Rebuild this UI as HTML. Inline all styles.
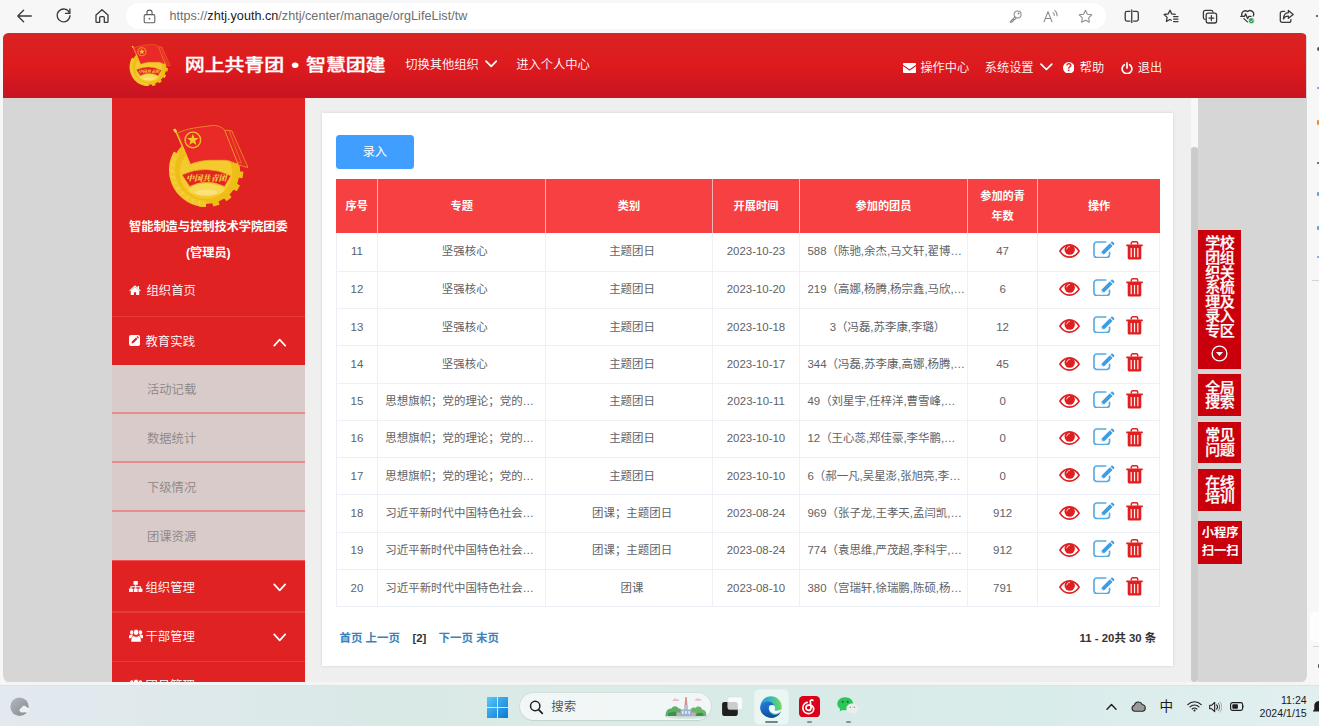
<!DOCTYPE html>
<html lang="zh-CN">
<head>
<meta charset="utf-8">
<title>智慧团建</title>
<style>
*{box-sizing:border-box;margin:0;padding:0}
html,body{width:1319px;height:726px;overflow:hidden}
body{position:relative;background:#f7f7f7;font-family:"Liberation Sans","Noto Sans CJK SC",sans-serif;color:#333;font-size:12px}
.abs{position:absolute}
/* ---------- browser chrome ---------- */
#chrome{position:absolute;left:0;top:0;width:1319px;height:33px;background:#f7f7f7}
#urlbar{position:absolute;left:126px;top:3px;width:980px;height:26px;border-radius:13px;background:#fff}
#url{position:absolute;left:169.4px;top:8px;font-size:12.6px;line-height:16px;color:#6e6e6e;white-space:nowrap;letter-spacing:0.02px}
#url b{font-weight:400;color:#1b1b1b}
.cico{position:absolute;stroke:#3a3a3a;fill:none;stroke-width:1.3;stroke-linecap:round;stroke-linejoin:round}
/* ---------- page ---------- */
#page{position:absolute;left:3.4px;top:32.5px;width:1303.2px;height:650.5px;background:#d6d6d6;border-radius:5.5px 5.5px 8px 8px;overflow:hidden}
#hdr{position:absolute;left:0;top:0;width:1303px;height:65px;background:linear-gradient(#d82424 0%,#dc2020 18%,#de1b1e 40%,#dc1a1e 55%,#d2171f 76%,#c81423 100%)}
#hdr .t{position:absolute;color:#fff;white-space:nowrap}
#side{position:absolute;left:108.6px;top:65px;width:192.7px;height:600px;background:#e12222;color:#fff}
#main{position:absolute;left:301.3px;top:65px;width:886.3px;height:600px;background:#efefef}
#sb{position:absolute;left:1187.9px;top:114.5px;width:6.3px;height:535.3px;background:#cbcbcb;border-radius:3.2px}
#sbtrack{position:absolute;left:1187.6px;top:65px;width:7px;height:600px;background:#f7f7f7}
#card{position:absolute;left:17.2px;top:15.5px;width:851.5px;height:552.5px;background:#fff;box-shadow:0 0 3px rgba(0,0,0,.12)}


#ttl{left:181.4px;top:17px;font-size:20px;line-height:30px;font-weight:500;-webkit-text-stroke:.3px #fff;letter-spacing:-0.15px;transform:scaleY(.86);transform-origin:0 50%}
#ttl .dot{display:inline-block;width:22px;text-align:center;font-size:24px;line-height:10px;vertical-align:-1.2px;-webkit-text-stroke:0;font-family:"Liberation Sans",sans-serif}
#hdr .nav{font-size:12.3px;line-height:18px;font-weight:350;letter-spacing:-0.05px}
#hdr .nav2{font-size:12.2px;line-height:18px;font-weight:350}

/* ---------- sidebar ---------- */
#side .org{position:absolute;left:0;width:192.7px;text-align:center;font-size:12.25px;line-height:18px;font-weight:700;white-space:nowrap;letter-spacing:-0.05px}
#side .m1{position:absolute;font-size:12.4px;line-height:18px;font-weight:350;white-space:nowrap}
#side .hl{position:absolute;left:0;width:192.7px;height:1.6px;background:#e83c3c}
#side .hl.b{background:#f05252;height:1px}
#sub{position:absolute;left:0;top:267.8px;width:192.7px;height:194.8px;background:#d9cbc9}
#sub .s{height:48.9px;border-bottom:2px solid #e88d8d;padding-left:35px;font-size:12.3px;line-height:50.6px;color:#8c8686;font-weight:350}
#sub .s.last{border-bottom:0}

/* ---------- floating buttons ---------- */
.fb{position:absolute;left:1195px;width:42.7px;background:#c9000b;color:#fff;text-align:center;font-size:15px;line-height:14.6px;font-weight:500;-webkit-text-stroke:.25px #fff;letter-spacing:-0.4px;white-space:nowrap;overflow:hidden}
.fb.s{-webkit-text-stroke:0;font-size:12.3px;font-weight:700;line-height:18.2px;letter-spacing:-0.1px;width:43.4px}

/* edge sidebar bits */
.eb{position:absolute;border-radius:1px}
/* ---------- card ---------- */
#btn{position:absolute;left:14px;top:22px;width:78px;height:34px;border-radius:3.5px;background:#409eff;color:#fff;font-size:12.2px;line-height:34px;text-align:center}
#tb{position:absolute;left:14px;top:66px;width:823.6px;border-collapse:collapse;table-layout:fixed;font-size:11.45px;color:#606266}
#tb th{height:54.2px;background:#f64041;color:#fff;font-weight:700;font-size:11.2px;border-right:1px solid #f1b3b3;text-align:center;line-height:20.2px;padding:0}
#tb th:last-child{border-right:0}
#tb td{height:37.27px;border-bottom:1px solid #edf0f6;border-right:1px solid #edf0f6;text-align:center;padding:0;white-space:nowrap;overflow:hidden;line-height:19px}
#tb td:first-child{border-left:1px solid #ebeef5}
#tb tbody tr:first-child td{height:38.1px}
#tb td.l{text-align:left;padding-left:7.3px}
#tb td.c{padding-left:6px}
#tb td.c2{padding-left:8px}
#tb td.op{font-size:0}
#tb svg{display:inline-block;vertical-align:middle;position:relative;top:-1.7px}
.i-eye{width:21px;height:14px;margin:2px 12.7px 0 4.8px}
.i-edit{width:21.4px;height:17.5px;margin:-1px 11.6px 0 0}
.i-trash{width:17px;height:19px;margin:0 0 0 0}
#pgl{position:absolute;left:17.6px;top:516.7px;font-size:11.45px;line-height:16px;font-weight:700;color:#3a82b9;white-space:nowrap}
#pgl b{color:#333;margin:0 12.2px 0 12.6px}
#pgr{position:absolute;right:17.2px;top:516.7px;font-size:11.4px;line-height:16px;font-weight:700;color:#333;white-space:nowrap}
/* ---------- taskbar ---------- */
#gap{position:absolute;left:0;top:682px;width:1319px;height:4px;background:#f5f5f5}
#task{position:absolute;left:0;top:686px;width:1319px;height:40px;background:linear-gradient(90deg,#e2e9ef 0%,#dfe9ec 12%,#d9e9e6 30%,#dcebe6 45%,#d8ebe8 60%,#d8ecea 78%,#e2eff0 100%);box-shadow:0 -1px 0 #dde4e6}
#srch{left:520px;top:7.2px;width:190.6px;height:27px;border-radius:13.5px;background:rgba(255,255,255,.62);box-shadow:0 0 0 .7px rgba(190,205,205,.4),0 .8px 1px rgba(120,140,140,.25)}
#srch span{position:absolute;left:31.2px;top:4.4px;font-size:12.5px;line-height:18px;color:#4e4e4e;font-weight:350}
.ind{position:absolute;top:35px;height:2.2px;border-radius:1.2px;background:#8a8f90}
.clk{right:12.3px;font-size:10.6px;line-height:14px;color:#1b1b1b;text-align:right;white-space:nowrap;font-family:"Liberation Sans",sans-serif}
</style>
</head>
<body>
<svg width="0" height="0" style="position:absolute"><defs>
<symbol id="emblem" viewBox="65 55 615 632">
  <!-- gear teeth -->
  <g fill="#efbd17">
    <circle cx="357" cy="400" r="262"/>
    <g transform="translate(357 400)">
      <rect x="245" y="-26" width="42" height="50" transform="rotate(8)"/>
      <rect x="245" y="-26" width="42" height="50" transform="rotate(30)"/>
      <rect x="245" y="-26" width="42" height="50" transform="rotate(52)"/>
      <rect x="245" y="-26" width="42" height="50" transform="rotate(74)"/>
      <rect x="245" y="-26" width="40" height="50" transform="rotate(96)"/>
    </g>
  </g>
  <!-- wheat side -->
  <path d="M357 685 A285 285 0 0 1 110 258 L150 282 A238 238 0 0 0 357 638 Z" fill="#f3c62a"/>
  <g fill="none" stroke="#f7d558" stroke-width="9" stroke-linecap="round" opacity=".75">
    <path d="M98 300 l26 24M84 350 l30 20M80 402 l32 14M86 452 l32 6M102 502 l30 -4M128 548 l28 -12M162 590 l24 -18M204 626 l18 -24M252 652 l12 -26M304 668 l6 -28"/>
  </g>
  <!-- inner disc -->
  <circle cx="357" cy="420" r="205" fill="#f4ca2e"/>
  <circle cx="357" cy="420" r="205" fill="none" stroke="#e9b412" stroke-width="5" opacity=".6"/>
  <!-- sun -->
  <ellipse cx="360" cy="552" rx="135" ry="46" fill="#f8d955"/>
  <ellipse cx="360" cy="575" rx="86" ry="22" fill="#fbe27a"/>
  <!-- banner -->
  <path d="M172 438 Q360 352 548 446 L500 528 Q360 462 232 528 Z" fill="#e32424" stroke="#f0b822" stroke-width="5" stroke-linejoin="round"/>
  <text x="360" y="486" font-family="'Liberation Serif','Noto Serif CJK SC',serif" font-size="62" font-weight="900" font-style="italic" fill="#f7d040" text-anchor="middle" textLength="312" lengthAdjust="spacingAndGlyphs">中国共青团</text>
  <!-- flag back fold -->
  <path d="M498 94 L556 100 L680 382 L606 362 Z" fill="#e62828" stroke="#f0b326" stroke-width="5" stroke-linejoin="round"/>
  <path d="M535 98 L628 348 L560 336" fill="none" stroke="#f0b326" stroke-width="4" opacity=".85"/>
  <!-- flag front -->
  <path d="M138 116 C220 78 300 74 380 62 C430 54 470 60 500 94 L602 352 C560 350 545 322 480 326 C400 328 330 318 236 358 Z" fill="#e92a28" stroke="#f0b326" stroke-width="5" stroke-linejoin="round"/>
  <!-- pole -->
  <path d="M122 100 L236 360" stroke="#f2c32a" stroke-width="9" stroke-linecap="round"/>
  <path d="M103 92 L120 82 L136 104 L120 116 Z" fill="#f6d24a"/>
  <!-- ring + star -->
  <circle cx="256" cy="170" r="60" fill="none" stroke="#f2bd22" stroke-width="11"/>
  <path d="M256.0 123.0 L267.2 154.6 L300.7 155.5 L274.1 175.9 L283.6 208.0 L256.0 189.0 L228.4 208.0 L237.9 175.9 L211.3 155.5 L244.8 154.6 Z" fill="#f4c628"/>
</symbol>
</defs></svg>

<div id="chrome">
  <div id="urlbar"></div>
<svg class="cico" style="left:16px;top:7.5px;width:17px;height:16px" viewBox="0 0 17 16"><path d="M15.3 8 H2 M7.6 2.2 L1.8 8 L7.6 13.8"/></svg>
<svg class="cico" style="left:54.5px;top:7px;width:17px;height:17px" viewBox="0 0 17 17"><path d="M14.6 6.2 A6.4 6.4 0 1 0 15 8.6"/><path d="M14.9 2 V6.4 H10.5"/></svg>
<svg class="cico" style="left:93.5px;top:7.5px;width:16px;height:16px" viewBox="0 0 16 16"><path d="M2 7 L8 1.7 L14 7 V13.4 A0.9 0.9 0 0 1 13.1 14.3 H10.3 V9.6 A1 1 0 0 0 9.3 8.6 H6.7 A1 1 0 0 0 5.7 9.6 V14.3 H2.9 A0.9 0.9 0 0 1 2 13.4 Z"/></svg>
<svg class="cico" style="left:142.5px;top:8.5px;width:13px;height:15px;stroke:#5f5f5f;stroke-width:1.1" viewBox="0 0 13 15"><rect x="1.2" y="5.6" width="10.6" height="8.2" rx="1.4"/><path d="M3.9 5.6 V3.7 A2.6 2.6 0 0 1 9.1 3.7 V5.6"/><circle cx="6.5" cy="9.7" r=".9" fill="#5f5f5f" stroke="none"/></svg>
<!-- key -->
<svg class="cico" style="left:1008.5px;top:9.5px;width:13px;height:13px;stroke:#8c8c8c;stroke-width:1.05" viewBox="0 0 13 13"><circle cx="8.6" cy="4.4" r="3.5"/><path d="M6 6.9 L1.2 11.7 V12.2 H3.1 V10.9 H4.4 V9.6 H5.7 L7.1 8.2"/><circle cx="9.6" cy="3.4" r=".5"/></svg>
<!-- read aloud -->
<svg class="cico" style="left:1043px;top:8.5px;width:16px;height:14px;stroke:#8c8c8c;stroke-width:1.05" viewBox="0 0 16 14"><path d="M1 12.8 L5 2.6 L9 12.8 M2.4 9.4 H7.6"/><path d="M10 3.6 A3 3 0 0 1 11.3 6.6 M11.8 1.6 A5.4 5.4 0 0 1 14 6.8"/></svg>
<!-- star -->
<svg class="cico" style="left:1078px;top:8.5px;width:15px;height:14.5px;stroke:#8c8c8c;stroke-width:1.05" viewBox="0 0 15 14.5"><path d="M7.5 1.2 L9.4 5.2 L13.8 5.8 L10.6 8.9 L11.4 13.3 L7.5 11.2 L3.6 13.3 L4.4 8.9 L1.2 5.8 L5.6 5.2 Z"/></svg>
<!-- split -->
<svg class="cico" style="left:1123.5px;top:8.8px;width:15.5px;height:14.5px" viewBox="0 0 15.5 14.5"><path d="M6 2.4 H3 A1.8 1.8 0 0 0 1.2 4.2 V10.3 A1.8 1.8 0 0 0 3 12.1 H6 M9.5 2.4 H12.5 A1.8 1.8 0 0 1 14.3 4.2 V10.3 A1.8 1.8 0 0 1 12.5 12.1 H9.5 M7.75 0.8 V13.7"/></svg>
<!-- favorites -->
<svg class="cico" style="left:1162.5px;top:8.5px;width:16px;height:15px" viewBox="0 0 16 15"><path d="M7 1.3 L8.7 4.9 L12.2 5.4 M7 1.3 L5.2 4.9 L1.2 5.5 L4.1 8.4 L3.4 12.4 L7 10.5 L8.4 11.3"/><path d="M10.6 7.6 H15 M10.6 10.1 H15 M10.6 12.6 H15"/></svg>
<!-- collections -->
<svg class="cico" style="left:1201.5px;top:8.5px;width:16px;height:15px" viewBox="0 0 16 15"><rect x="4.2" y="4.2" width="10.4" height="9.8" rx="2"/><path d="M3.2 10.4 A1.9 1.9 0 0 1 1.4 8.5 V3.3 A2 2 0 0 1 3.4 1.3 H9 A1.9 1.9 0 0 1 10.9 3"/><path d="M9.4 6.6 V11.6 M6.9 9.1 H11.9"/></svg>
<!-- essentials -->
<svg class="cico" style="left:1240px;top:8.6px;width:16px;height:16px" viewBox="0 0 16 16"><path d="M2.3 7.3 A3.6 3.6 0 0 1 7.6 2.6 A3.6 3.6 0 0 1 13.2 7 M3.9 9.6 L7.4 12.9"/><path d="M0.8 7.4 H4.4 L5.7 4.9 L7.6 9.6 L8.9 7.4 H11"/><circle cx="11.4" cy="11.7" r="3" fill="#1f9a45" stroke="#f7f7f7" stroke-width=".8"/><path d="M10.1 11.8 L11.1 12.8 L12.8 10.8" stroke="#fff" stroke-width=".8"/></svg>
<!-- share -->
<svg class="cico" style="left:1279px;top:8.5px;width:15.5px;height:15px" viewBox="0 0 15.5 15"><path d="M5.6 2.4 H3.2 A1.9 1.9 0 0 0 1.3 4.3 V11.4 A1.9 1.9 0 0 0 3.2 13.3 H10 A1.9 1.9 0 0 0 11.9 11.4 V10.6"/><path d="M9.4 1.4 L14.2 5.4 L9.4 9.3 V7.1 C7 7 5.4 8 4.4 9.9 C4.6 6.4 6.4 4 9.4 3.7 Z"/></svg>
<div style="position:absolute;left:1315.6px;top:14.6px;width:2.4px;height:2.4px;border-radius:50%;background:#3a3a3a"></div>

  <div id="url">https://<b>zhtj.youth.cn</b>/zhtj/center/manage/orgLifeList/tw</div>
</div>
<div id="page">
  <div id="hdr">
<svg class="abs" style="left:126px;top:11.5px;width:41.4px;height:42.4px"><use href="#emblem"/></svg>
<div class="t" id="ttl">网上共青团<span class="dot">•</span>智慧团建</div>
<div class="t nav" style="left:401.8px;top:23.5px">切换其他组织</div>
<svg class="abs" style="left:481.6px;top:27.4px;width:12.4px;height:8px" viewBox="0 0 12.4 8"><path d="M1 1.2 L6.2 6.4 L11.4 1.2" fill="none" stroke="#fff" stroke-width="1.7" stroke-linecap="round" stroke-linejoin="round"/></svg>
<div class="t nav" style="left:512.8px;top:23.5px">进入个人中心</div>
<svg class="abs" style="left:899.6px;top:30.2px;width:13.2px;height:10px" viewBox="0 0 13.2 10"><path d="M0 1.1 A1.1 1.1 0 0 1 1.1 0 H12.1 A1.1 1.1 0 0 1 13.2 1.1 V1.7 L6.6 6.3 L0 1.7 Z M0 3.1 L6.6 7.7 L13.2 3.1 V8.9 A1.1 1.1 0 0 1 12.1 10 H1.1 A1.1 1.1 0 0 1 0 8.9 Z" fill="#fff"/></svg>
<div class="t nav2" style="left:917px;top:26px">操作中心</div>
<div class="t nav2" style="left:981.4px;top:26px">系统设置</div>
<svg class="abs" style="left:1036.4px;top:30.4px;width:12.8px;height:8px" viewBox="0 0 12.8 8"><path d="M1 1.2 L6.4 6.5 L11.8 1.2" fill="none" stroke="#fff" stroke-width="1.7" stroke-linecap="round" stroke-linejoin="round"/></svg>
<svg class="abs" style="left:1059.2px;top:29.4px;width:11.6px;height:11.6px" viewBox="0 0 12 12"><circle cx="6" cy="6" r="6" fill="#fff"/><text x="6" y="9.8" font-family="'Liberation Sans',sans-serif" font-size="10.6" font-weight="700" fill="#d81c1f" text-anchor="middle">?</text></svg>
<div class="t nav2" style="left:1076.4px;top:26px">帮助</div>
<svg class="abs" style="left:1117.8px;top:29px;width:12px;height:12.4px" viewBox="0 0 12 12.4"><path d="M3.3 2.7 A4.9 4.9 0 1 0 8.7 2.7" fill="none" stroke="#fff" stroke-width="1.7" stroke-linecap="round"/><path d="M6 0.9 V6" stroke="#fff" stroke-width="1.7" stroke-linecap="round"/></svg>
<div class="t nav2" style="left:1134.4px;top:26px">退出</div>

</div>
  <div id="side">
<svg class="abs" style="left:56px;top:27.2px;width:80px;height:82.2px"><use href="#emblem"/></svg>
<div class="org" style="top:120.2px">智能制造与控制技术学院团委</div>
<div class="org" style="top:146.8px">(管理员)</div>
<!-- 组织首页 -->
<svg class="abs" style="left:17.2px;top:187.2px;width:12px;height:10.8px" viewBox="0 0 11.6 9.6" preserveAspectRatio="none"><path d="M5.8 1.7 L1.7 5.1 V8.9 A0.4 0.4 0 0 0 2.1 9.3 H4.7 V6.4 H6.9 V9.3 H9.5 A0.4 0.4 0 0 0 9.9 8.9 V5.1 Z" fill="#fff"/><path d="M0.3 4.8 L5.8 0.3 L8.3 2.35 V1 H9.7 V3.5 L11.3 4.8 L10.7 5.5 L5.8 1.5 L0.9 5.5 Z" fill="#fff"/></svg>
<div class="m1" style="left:34.4px;top:184.2px">组织首页</div>
<div class="hl" style="top:218.2px"></div>
<!-- 教育实践 -->
<svg class="abs" style="left:17.4px;top:237.5px;width:11px;height:11px" viewBox="0 0 11 11"><rect x="0" y="0" width="11" height="11" rx="2" fill="#fff"/><path d="M2.5 8.5 L2.9 6.5 L7 2.4 L8.6 4 L4.5 8.1 Z M7.5 1.9 L8.1 1.3 A0.5 0.5 0 0 1 8.8 1.3 L9.7 2.2 A0.5 0.5 0 0 1 9.7 2.9 L9.1 3.5 Z" fill="#e12222"/></svg>
<div class="m1" style="left:33.5px;top:235.3px">教育实践</div>
<svg class="abs" style="left:161px;top:240.2px;width:13.4px;height:9px" viewBox="0 0 13.4 9"><path d="M1.2 7.6 L6.7 1.6 L12.2 7.6" fill="none" stroke="#fff" stroke-width="1.7" stroke-linecap="round" stroke-linejoin="round"/></svg>
<div id="sub">
  <div class="s">活动记载</div>
  <div class="s">数据统计</div>
  <div class="s">下级情况</div>
  <div class="s last">团课资源</div>
</div>
<!-- 组织管理 -->
<div class="hl b" style="top:462.6px"></div>
<svg class="abs" style="left:17.2px;top:483.2px;width:13.4px;height:11.4px" viewBox="0 0 13 10.6" preserveAspectRatio="none"><rect x="4.4" y="0" width="4.2" height="3.6" rx=".5" fill="#fff"/><rect x="0" y="7" width="3.8" height="3.6" rx=".5" fill="#fff"/><rect x="4.6" y="7" width="3.8" height="3.6" rx=".5" fill="#fff"/><rect x="9.2" y="7" width="3.8" height="3.6" rx=".5" fill="#fff"/><path d="M6.5 3.4 V7.2 M1.9 7.2 V5.3 H11.1 V7.2" fill="none" stroke="#fff" stroke-width="1"/></svg>
<div class="m1" style="left:33.4px;top:481px">组织管理</div>
<svg class="abs" style="left:161px;top:485.6px;width:13.4px;height:9px" viewBox="0 0 13.4 9"><path d="M1.2 1.4 L6.7 7.4 L12.2 1.4" fill="none" stroke="#fff" stroke-width="1.7" stroke-linecap="round" stroke-linejoin="round"/></svg>
<div class="hl" style="top:513.8px"></div>
<!-- 干部管理 -->
<svg class="abs usr" style="left:17px;top:531.6px;width:14.2px;height:13px" viewBox="0 0 13.8 11.6" preserveAspectRatio="none"><circle cx="2.7" cy="2.9" r="1.7" fill="#fff"/><circle cx="11.1" cy="2.9" r="1.7" fill="#fff"/><path d="M0 8.2 V6.7 A1.9 1.9 0 0 1 1.9 4.8 H3.6 L3.4 8.2 Z M13.8 8.2 V6.7 A1.9 1.9 0 0 0 11.9 4.8 H10.2 L10.4 8.2 Z" fill="#fff"/><circle cx="6.9" cy="3" r="2.7" fill="#fff" stroke="#e12222" stroke-width=".7"/><path d="M2.6 11.6 A1 1 0 0 1 1.9 10.6 C1.9 8 3.2 6 4.7 6 C5.3 6.5 6 6.9 6.9 6.9 C7.8 6.9 8.5 6.5 9.1 6 C10.6 6 11.9 8 11.9 10.6 A1 1 0 0 1 11.2 11.6 Z" fill="#fff" stroke="#e12222" stroke-width=".5"/></svg>
<div class="m1" style="left:33.4px;top:530.3px">干部管理</div>
<svg class="abs" style="left:161px;top:535px;width:13.4px;height:9px" viewBox="0 0 13.4 9"><path d="M1.2 1.4 L6.7 7.4 L12.2 1.4" fill="none" stroke="#fff" stroke-width="1.7" stroke-linecap="round" stroke-linejoin="round"/></svg>
<div class="hl" style="top:563.2px"></div>
<!-- 团员管理 (cut) -->
<svg class="abs usr" style="left:17px;top:581px;width:14.2px;height:13px" viewBox="0 0 13.8 11.6" preserveAspectRatio="none"><circle cx="2.7" cy="2.9" r="1.7" fill="#fff"/><circle cx="11.1" cy="2.9" r="1.7" fill="#fff"/><path d="M0 8.2 V6.7 A1.9 1.9 0 0 1 1.9 4.8 H3.6 L3.4 8.2 Z M13.8 8.2 V6.7 A1.9 1.9 0 0 0 11.9 4.8 H10.2 L10.4 8.2 Z" fill="#fff"/><circle cx="6.9" cy="3" r="2.7" fill="#fff" stroke="#e12222" stroke-width=".7"/><path d="M2.6 11.6 A1 1 0 0 1 1.9 10.6 C1.9 8 3.2 6 4.7 6 C5.3 6.5 6 6.9 6.9 6.9 C7.8 6.9 8.5 6.5 9.1 6 C10.6 6 11.9 8 11.9 10.6 A1 1 0 0 1 11.2 11.6 Z" fill="#fff" stroke="#e12222" stroke-width=".5"/></svg>
<div class="m1" style="left:33.4px;top:579.8px">团员管理</div>

</div>
  <div id="main">
    <div id="card">
<div id="btn">录入</div>
<table id="tb"><colgroup><col style="width:41.2px"><col style="width:168.3px"><col style="width:166.4px"><col style="width:87.4px"><col style="width:167.7px"><col style="width:70.5px"><col style="width:122.1px"></colgroup>
<thead><tr><th>序号</th><th>专题</th><th>类别</th><th>开展时间</th><th>参加的团员</th><th><span class="two">参加的青<br>年数</span></th><th>操作</th></tr></thead><tbody>
<tr><td>11</td><td class="c">坚强核心</td><td class="c">主题团日</td><td>2023-10-23</td><td class="l">588（陈驰,余杰,马文轩,翟博…</td><td>47</td><td class="op"><svg class="i-eye" viewBox="0 0 21 14"><path d="M0.9 7.1 C3.6 2.6 7 0.9 10.5 0.9 C14 0.9 17.4 2.6 20.1 7.1 C17.4 11.4 14 13.1 10.5 13.1 C7 13.1 3.6 11.4 0.9 7.1 Z" fill="none" stroke="#df2020" stroke-width="1.7"/><circle cx="10.7" cy="5.6" r="5.2" fill="#df2020"/><path d="M7.7 5 A3.1 3.1 0 0 1 10.6 2.3" fill="none" stroke="#fff" stroke-width="0.9" stroke-linecap="round" opacity=".85"/></svg><svg class="i-edit" viewBox="0 0 22 18"><path d="M13.2 1 H4 A3 3 0 0 0 1 4 V14 A3 3 0 0 0 4 17 H14 A3 3 0 0 0 17 14 V11.6" fill="none" stroke="#55abe6" stroke-width="1.7" stroke-linecap="round"/><path d="M8.6 13.9 L9.2 10.6 L17.4 2.4 L20.1 5.1 L11.9 13.3 Z" fill="#3b9de2"/><path d="M18.1 1.7 L19 0.8 A0.9 0.9 0 0 1 20.3 0.8 L21.7 2.2 A0.9 0.9 0 0 1 21.7 3.5 L20.8 4.4 Z" fill="#3b9de2"/><path d="M8.6 13.9 L9 11.7 L10.8 13.5 Z" fill="#fff" opacity=".9"/></svg><svg class="i-trash" viewBox="0 0 17 19"><path d="M5.3 3.6 V2.2 A1.4 1.4 0 0 1 6.7 0.8 H10.3 A1.4 1.4 0 0 1 11.7 2.2 V3.6" fill="none" stroke="#df2020" stroke-width="1.5"/><rect x="0.2" y="3.6" width="16.6" height="1.7" rx=".5" fill="#df2020"/><path d="M1.7 5 H15.3 V17 A1.6 1.6 0 0 1 13.7 18.6 H3.3 A1.6 1.6 0 0 1 1.7 17 Z" fill="#df2020"/><rect x="4.6" y="7" width="1.25" height="9.2" fill="#fff" opacity=".92"/><rect x="7.9" y="7" width="1.25" height="9.2" fill="#fff" opacity=".92"/><rect x="11.2" y="7" width="1.25" height="9.2" fill="#fff" opacity=".92"/></svg></td></tr>
<tr><td>12</td><td class="c">坚强核心</td><td class="c">主题团日</td><td>2023-10-20</td><td class="l">219（高娜,杨腾,杨宗鑫,马欣,…</td><td>6</td><td class="op"><svg class="i-eye" viewBox="0 0 21 14"><path d="M0.9 7.1 C3.6 2.6 7 0.9 10.5 0.9 C14 0.9 17.4 2.6 20.1 7.1 C17.4 11.4 14 13.1 10.5 13.1 C7 13.1 3.6 11.4 0.9 7.1 Z" fill="none" stroke="#df2020" stroke-width="1.7"/><circle cx="10.7" cy="5.6" r="5.2" fill="#df2020"/><path d="M7.7 5 A3.1 3.1 0 0 1 10.6 2.3" fill="none" stroke="#fff" stroke-width="0.9" stroke-linecap="round" opacity=".85"/></svg><svg class="i-edit" viewBox="0 0 22 18"><path d="M13.2 1 H4 A3 3 0 0 0 1 4 V14 A3 3 0 0 0 4 17 H14 A3 3 0 0 0 17 14 V11.6" fill="none" stroke="#55abe6" stroke-width="1.7" stroke-linecap="round"/><path d="M8.6 13.9 L9.2 10.6 L17.4 2.4 L20.1 5.1 L11.9 13.3 Z" fill="#3b9de2"/><path d="M18.1 1.7 L19 0.8 A0.9 0.9 0 0 1 20.3 0.8 L21.7 2.2 A0.9 0.9 0 0 1 21.7 3.5 L20.8 4.4 Z" fill="#3b9de2"/><path d="M8.6 13.9 L9 11.7 L10.8 13.5 Z" fill="#fff" opacity=".9"/></svg><svg class="i-trash" viewBox="0 0 17 19"><path d="M5.3 3.6 V2.2 A1.4 1.4 0 0 1 6.7 0.8 H10.3 A1.4 1.4 0 0 1 11.7 2.2 V3.6" fill="none" stroke="#df2020" stroke-width="1.5"/><rect x="0.2" y="3.6" width="16.6" height="1.7" rx=".5" fill="#df2020"/><path d="M1.7 5 H15.3 V17 A1.6 1.6 0 0 1 13.7 18.6 H3.3 A1.6 1.6 0 0 1 1.7 17 Z" fill="#df2020"/><rect x="4.6" y="7" width="1.25" height="9.2" fill="#fff" opacity=".92"/><rect x="7.9" y="7" width="1.25" height="9.2" fill="#fff" opacity=".92"/><rect x="11.2" y="7" width="1.25" height="9.2" fill="#fff" opacity=".92"/></svg></td></tr>
<tr><td>13</td><td class="c">坚强核心</td><td class="c">主题团日</td><td>2023-10-18</td><td class="c2">3（冯磊,苏李康,李璐）</td><td>12</td><td class="op"><svg class="i-eye" viewBox="0 0 21 14"><path d="M0.9 7.1 C3.6 2.6 7 0.9 10.5 0.9 C14 0.9 17.4 2.6 20.1 7.1 C17.4 11.4 14 13.1 10.5 13.1 C7 13.1 3.6 11.4 0.9 7.1 Z" fill="none" stroke="#df2020" stroke-width="1.7"/><circle cx="10.7" cy="5.6" r="5.2" fill="#df2020"/><path d="M7.7 5 A3.1 3.1 0 0 1 10.6 2.3" fill="none" stroke="#fff" stroke-width="0.9" stroke-linecap="round" opacity=".85"/></svg><svg class="i-edit" viewBox="0 0 22 18"><path d="M13.2 1 H4 A3 3 0 0 0 1 4 V14 A3 3 0 0 0 4 17 H14 A3 3 0 0 0 17 14 V11.6" fill="none" stroke="#55abe6" stroke-width="1.7" stroke-linecap="round"/><path d="M8.6 13.9 L9.2 10.6 L17.4 2.4 L20.1 5.1 L11.9 13.3 Z" fill="#3b9de2"/><path d="M18.1 1.7 L19 0.8 A0.9 0.9 0 0 1 20.3 0.8 L21.7 2.2 A0.9 0.9 0 0 1 21.7 3.5 L20.8 4.4 Z" fill="#3b9de2"/><path d="M8.6 13.9 L9 11.7 L10.8 13.5 Z" fill="#fff" opacity=".9"/></svg><svg class="i-trash" viewBox="0 0 17 19"><path d="M5.3 3.6 V2.2 A1.4 1.4 0 0 1 6.7 0.8 H10.3 A1.4 1.4 0 0 1 11.7 2.2 V3.6" fill="none" stroke="#df2020" stroke-width="1.5"/><rect x="0.2" y="3.6" width="16.6" height="1.7" rx=".5" fill="#df2020"/><path d="M1.7 5 H15.3 V17 A1.6 1.6 0 0 1 13.7 18.6 H3.3 A1.6 1.6 0 0 1 1.7 17 Z" fill="#df2020"/><rect x="4.6" y="7" width="1.25" height="9.2" fill="#fff" opacity=".92"/><rect x="7.9" y="7" width="1.25" height="9.2" fill="#fff" opacity=".92"/><rect x="11.2" y="7" width="1.25" height="9.2" fill="#fff" opacity=".92"/></svg></td></tr>
<tr><td>14</td><td class="c">坚强核心</td><td class="c">主题团日</td><td>2023-10-17</td><td class="l">344（冯磊,苏李康,高娜,杨腾,…</td><td>45</td><td class="op"><svg class="i-eye" viewBox="0 0 21 14"><path d="M0.9 7.1 C3.6 2.6 7 0.9 10.5 0.9 C14 0.9 17.4 2.6 20.1 7.1 C17.4 11.4 14 13.1 10.5 13.1 C7 13.1 3.6 11.4 0.9 7.1 Z" fill="none" stroke="#df2020" stroke-width="1.7"/><circle cx="10.7" cy="5.6" r="5.2" fill="#df2020"/><path d="M7.7 5 A3.1 3.1 0 0 1 10.6 2.3" fill="none" stroke="#fff" stroke-width="0.9" stroke-linecap="round" opacity=".85"/></svg><svg class="i-edit" viewBox="0 0 22 18"><path d="M13.2 1 H4 A3 3 0 0 0 1 4 V14 A3 3 0 0 0 4 17 H14 A3 3 0 0 0 17 14 V11.6" fill="none" stroke="#55abe6" stroke-width="1.7" stroke-linecap="round"/><path d="M8.6 13.9 L9.2 10.6 L17.4 2.4 L20.1 5.1 L11.9 13.3 Z" fill="#3b9de2"/><path d="M18.1 1.7 L19 0.8 A0.9 0.9 0 0 1 20.3 0.8 L21.7 2.2 A0.9 0.9 0 0 1 21.7 3.5 L20.8 4.4 Z" fill="#3b9de2"/><path d="M8.6 13.9 L9 11.7 L10.8 13.5 Z" fill="#fff" opacity=".9"/></svg><svg class="i-trash" viewBox="0 0 17 19"><path d="M5.3 3.6 V2.2 A1.4 1.4 0 0 1 6.7 0.8 H10.3 A1.4 1.4 0 0 1 11.7 2.2 V3.6" fill="none" stroke="#df2020" stroke-width="1.5"/><rect x="0.2" y="3.6" width="16.6" height="1.7" rx=".5" fill="#df2020"/><path d="M1.7 5 H15.3 V17 A1.6 1.6 0 0 1 13.7 18.6 H3.3 A1.6 1.6 0 0 1 1.7 17 Z" fill="#df2020"/><rect x="4.6" y="7" width="1.25" height="9.2" fill="#fff" opacity=".92"/><rect x="7.9" y="7" width="1.25" height="9.2" fill="#fff" opacity=".92"/><rect x="11.2" y="7" width="1.25" height="9.2" fill="#fff" opacity=".92"/></svg></td></tr>
<tr><td>15</td><td class="l">思想旗帜；党的理论；党的…</td><td class="c">主题团日</td><td>2023-10-11</td><td class="l">49（刘星宇,任梓洋,曹雪峰,…</td><td>0</td><td class="op"><svg class="i-eye" viewBox="0 0 21 14"><path d="M0.9 7.1 C3.6 2.6 7 0.9 10.5 0.9 C14 0.9 17.4 2.6 20.1 7.1 C17.4 11.4 14 13.1 10.5 13.1 C7 13.1 3.6 11.4 0.9 7.1 Z" fill="none" stroke="#df2020" stroke-width="1.7"/><circle cx="10.7" cy="5.6" r="5.2" fill="#df2020"/><path d="M7.7 5 A3.1 3.1 0 0 1 10.6 2.3" fill="none" stroke="#fff" stroke-width="0.9" stroke-linecap="round" opacity=".85"/></svg><svg class="i-edit" viewBox="0 0 22 18"><path d="M13.2 1 H4 A3 3 0 0 0 1 4 V14 A3 3 0 0 0 4 17 H14 A3 3 0 0 0 17 14 V11.6" fill="none" stroke="#55abe6" stroke-width="1.7" stroke-linecap="round"/><path d="M8.6 13.9 L9.2 10.6 L17.4 2.4 L20.1 5.1 L11.9 13.3 Z" fill="#3b9de2"/><path d="M18.1 1.7 L19 0.8 A0.9 0.9 0 0 1 20.3 0.8 L21.7 2.2 A0.9 0.9 0 0 1 21.7 3.5 L20.8 4.4 Z" fill="#3b9de2"/><path d="M8.6 13.9 L9 11.7 L10.8 13.5 Z" fill="#fff" opacity=".9"/></svg><svg class="i-trash" viewBox="0 0 17 19"><path d="M5.3 3.6 V2.2 A1.4 1.4 0 0 1 6.7 0.8 H10.3 A1.4 1.4 0 0 1 11.7 2.2 V3.6" fill="none" stroke="#df2020" stroke-width="1.5"/><rect x="0.2" y="3.6" width="16.6" height="1.7" rx=".5" fill="#df2020"/><path d="M1.7 5 H15.3 V17 A1.6 1.6 0 0 1 13.7 18.6 H3.3 A1.6 1.6 0 0 1 1.7 17 Z" fill="#df2020"/><rect x="4.6" y="7" width="1.25" height="9.2" fill="#fff" opacity=".92"/><rect x="7.9" y="7" width="1.25" height="9.2" fill="#fff" opacity=".92"/><rect x="11.2" y="7" width="1.25" height="9.2" fill="#fff" opacity=".92"/></svg></td></tr>
<tr><td>16</td><td class="l">思想旗帜；党的理论；党的…</td><td class="c">主题团日</td><td>2023-10-10</td><td class="l">12（王心蕊,郑佳豪,李华鹏,…</td><td>0</td><td class="op"><svg class="i-eye" viewBox="0 0 21 14"><path d="M0.9 7.1 C3.6 2.6 7 0.9 10.5 0.9 C14 0.9 17.4 2.6 20.1 7.1 C17.4 11.4 14 13.1 10.5 13.1 C7 13.1 3.6 11.4 0.9 7.1 Z" fill="none" stroke="#df2020" stroke-width="1.7"/><circle cx="10.7" cy="5.6" r="5.2" fill="#df2020"/><path d="M7.7 5 A3.1 3.1 0 0 1 10.6 2.3" fill="none" stroke="#fff" stroke-width="0.9" stroke-linecap="round" opacity=".85"/></svg><svg class="i-edit" viewBox="0 0 22 18"><path d="M13.2 1 H4 A3 3 0 0 0 1 4 V14 A3 3 0 0 0 4 17 H14 A3 3 0 0 0 17 14 V11.6" fill="none" stroke="#55abe6" stroke-width="1.7" stroke-linecap="round"/><path d="M8.6 13.9 L9.2 10.6 L17.4 2.4 L20.1 5.1 L11.9 13.3 Z" fill="#3b9de2"/><path d="M18.1 1.7 L19 0.8 A0.9 0.9 0 0 1 20.3 0.8 L21.7 2.2 A0.9 0.9 0 0 1 21.7 3.5 L20.8 4.4 Z" fill="#3b9de2"/><path d="M8.6 13.9 L9 11.7 L10.8 13.5 Z" fill="#fff" opacity=".9"/></svg><svg class="i-trash" viewBox="0 0 17 19"><path d="M5.3 3.6 V2.2 A1.4 1.4 0 0 1 6.7 0.8 H10.3 A1.4 1.4 0 0 1 11.7 2.2 V3.6" fill="none" stroke="#df2020" stroke-width="1.5"/><rect x="0.2" y="3.6" width="16.6" height="1.7" rx=".5" fill="#df2020"/><path d="M1.7 5 H15.3 V17 A1.6 1.6 0 0 1 13.7 18.6 H3.3 A1.6 1.6 0 0 1 1.7 17 Z" fill="#df2020"/><rect x="4.6" y="7" width="1.25" height="9.2" fill="#fff" opacity=".92"/><rect x="7.9" y="7" width="1.25" height="9.2" fill="#fff" opacity=".92"/><rect x="11.2" y="7" width="1.25" height="9.2" fill="#fff" opacity=".92"/></svg></td></tr>
<tr><td>17</td><td class="l">思想旗帜；党的理论；党的…</td><td class="c">主题团日</td><td>2023-10-10</td><td class="l">6（郝一凡,吴星澎,张旭亮,李…</td><td>0</td><td class="op"><svg class="i-eye" viewBox="0 0 21 14"><path d="M0.9 7.1 C3.6 2.6 7 0.9 10.5 0.9 C14 0.9 17.4 2.6 20.1 7.1 C17.4 11.4 14 13.1 10.5 13.1 C7 13.1 3.6 11.4 0.9 7.1 Z" fill="none" stroke="#df2020" stroke-width="1.7"/><circle cx="10.7" cy="5.6" r="5.2" fill="#df2020"/><path d="M7.7 5 A3.1 3.1 0 0 1 10.6 2.3" fill="none" stroke="#fff" stroke-width="0.9" stroke-linecap="round" opacity=".85"/></svg><svg class="i-edit" viewBox="0 0 22 18"><path d="M13.2 1 H4 A3 3 0 0 0 1 4 V14 A3 3 0 0 0 4 17 H14 A3 3 0 0 0 17 14 V11.6" fill="none" stroke="#55abe6" stroke-width="1.7" stroke-linecap="round"/><path d="M8.6 13.9 L9.2 10.6 L17.4 2.4 L20.1 5.1 L11.9 13.3 Z" fill="#3b9de2"/><path d="M18.1 1.7 L19 0.8 A0.9 0.9 0 0 1 20.3 0.8 L21.7 2.2 A0.9 0.9 0 0 1 21.7 3.5 L20.8 4.4 Z" fill="#3b9de2"/><path d="M8.6 13.9 L9 11.7 L10.8 13.5 Z" fill="#fff" opacity=".9"/></svg><svg class="i-trash" viewBox="0 0 17 19"><path d="M5.3 3.6 V2.2 A1.4 1.4 0 0 1 6.7 0.8 H10.3 A1.4 1.4 0 0 1 11.7 2.2 V3.6" fill="none" stroke="#df2020" stroke-width="1.5"/><rect x="0.2" y="3.6" width="16.6" height="1.7" rx=".5" fill="#df2020"/><path d="M1.7 5 H15.3 V17 A1.6 1.6 0 0 1 13.7 18.6 H3.3 A1.6 1.6 0 0 1 1.7 17 Z" fill="#df2020"/><rect x="4.6" y="7" width="1.25" height="9.2" fill="#fff" opacity=".92"/><rect x="7.9" y="7" width="1.25" height="9.2" fill="#fff" opacity=".92"/><rect x="11.2" y="7" width="1.25" height="9.2" fill="#fff" opacity=".92"/></svg></td></tr>
<tr><td>18</td><td class="l">习近平新时代中国特色社会…</td><td class="c">团课；主题团日</td><td>2023-08-24</td><td class="l">969（张子龙,王孝天,孟闫凯,…</td><td>912</td><td class="op"><svg class="i-eye" viewBox="0 0 21 14"><path d="M0.9 7.1 C3.6 2.6 7 0.9 10.5 0.9 C14 0.9 17.4 2.6 20.1 7.1 C17.4 11.4 14 13.1 10.5 13.1 C7 13.1 3.6 11.4 0.9 7.1 Z" fill="none" stroke="#df2020" stroke-width="1.7"/><circle cx="10.7" cy="5.6" r="5.2" fill="#df2020"/><path d="M7.7 5 A3.1 3.1 0 0 1 10.6 2.3" fill="none" stroke="#fff" stroke-width="0.9" stroke-linecap="round" opacity=".85"/></svg><svg class="i-edit" viewBox="0 0 22 18"><path d="M13.2 1 H4 A3 3 0 0 0 1 4 V14 A3 3 0 0 0 4 17 H14 A3 3 0 0 0 17 14 V11.6" fill="none" stroke="#55abe6" stroke-width="1.7" stroke-linecap="round"/><path d="M8.6 13.9 L9.2 10.6 L17.4 2.4 L20.1 5.1 L11.9 13.3 Z" fill="#3b9de2"/><path d="M18.1 1.7 L19 0.8 A0.9 0.9 0 0 1 20.3 0.8 L21.7 2.2 A0.9 0.9 0 0 1 21.7 3.5 L20.8 4.4 Z" fill="#3b9de2"/><path d="M8.6 13.9 L9 11.7 L10.8 13.5 Z" fill="#fff" opacity=".9"/></svg><svg class="i-trash" viewBox="0 0 17 19"><path d="M5.3 3.6 V2.2 A1.4 1.4 0 0 1 6.7 0.8 H10.3 A1.4 1.4 0 0 1 11.7 2.2 V3.6" fill="none" stroke="#df2020" stroke-width="1.5"/><rect x="0.2" y="3.6" width="16.6" height="1.7" rx=".5" fill="#df2020"/><path d="M1.7 5 H15.3 V17 A1.6 1.6 0 0 1 13.7 18.6 H3.3 A1.6 1.6 0 0 1 1.7 17 Z" fill="#df2020"/><rect x="4.6" y="7" width="1.25" height="9.2" fill="#fff" opacity=".92"/><rect x="7.9" y="7" width="1.25" height="9.2" fill="#fff" opacity=".92"/><rect x="11.2" y="7" width="1.25" height="9.2" fill="#fff" opacity=".92"/></svg></td></tr>
<tr><td>19</td><td class="l">习近平新时代中国特色社会…</td><td class="c">团课；主题团日</td><td>2023-08-24</td><td class="l">774（袁思维,严茂超,李科宇,…</td><td>912</td><td class="op"><svg class="i-eye" viewBox="0 0 21 14"><path d="M0.9 7.1 C3.6 2.6 7 0.9 10.5 0.9 C14 0.9 17.4 2.6 20.1 7.1 C17.4 11.4 14 13.1 10.5 13.1 C7 13.1 3.6 11.4 0.9 7.1 Z" fill="none" stroke="#df2020" stroke-width="1.7"/><circle cx="10.7" cy="5.6" r="5.2" fill="#df2020"/><path d="M7.7 5 A3.1 3.1 0 0 1 10.6 2.3" fill="none" stroke="#fff" stroke-width="0.9" stroke-linecap="round" opacity=".85"/></svg><svg class="i-edit" viewBox="0 0 22 18"><path d="M13.2 1 H4 A3 3 0 0 0 1 4 V14 A3 3 0 0 0 4 17 H14 A3 3 0 0 0 17 14 V11.6" fill="none" stroke="#55abe6" stroke-width="1.7" stroke-linecap="round"/><path d="M8.6 13.9 L9.2 10.6 L17.4 2.4 L20.1 5.1 L11.9 13.3 Z" fill="#3b9de2"/><path d="M18.1 1.7 L19 0.8 A0.9 0.9 0 0 1 20.3 0.8 L21.7 2.2 A0.9 0.9 0 0 1 21.7 3.5 L20.8 4.4 Z" fill="#3b9de2"/><path d="M8.6 13.9 L9 11.7 L10.8 13.5 Z" fill="#fff" opacity=".9"/></svg><svg class="i-trash" viewBox="0 0 17 19"><path d="M5.3 3.6 V2.2 A1.4 1.4 0 0 1 6.7 0.8 H10.3 A1.4 1.4 0 0 1 11.7 2.2 V3.6" fill="none" stroke="#df2020" stroke-width="1.5"/><rect x="0.2" y="3.6" width="16.6" height="1.7" rx=".5" fill="#df2020"/><path d="M1.7 5 H15.3 V17 A1.6 1.6 0 0 1 13.7 18.6 H3.3 A1.6 1.6 0 0 1 1.7 17 Z" fill="#df2020"/><rect x="4.6" y="7" width="1.25" height="9.2" fill="#fff" opacity=".92"/><rect x="7.9" y="7" width="1.25" height="9.2" fill="#fff" opacity=".92"/><rect x="11.2" y="7" width="1.25" height="9.2" fill="#fff" opacity=".92"/></svg></td></tr>
<tr><td>20</td><td class="l">习近平新时代中国特色社会…</td><td class="c">团课</td><td>2023-08-10</td><td class="l">380（宫瑞轩,徐瑞鹏,陈硕,杨…</td><td>791</td><td class="op"><svg class="i-eye" viewBox="0 0 21 14"><path d="M0.9 7.1 C3.6 2.6 7 0.9 10.5 0.9 C14 0.9 17.4 2.6 20.1 7.1 C17.4 11.4 14 13.1 10.5 13.1 C7 13.1 3.6 11.4 0.9 7.1 Z" fill="none" stroke="#df2020" stroke-width="1.7"/><circle cx="10.7" cy="5.6" r="5.2" fill="#df2020"/><path d="M7.7 5 A3.1 3.1 0 0 1 10.6 2.3" fill="none" stroke="#fff" stroke-width="0.9" stroke-linecap="round" opacity=".85"/></svg><svg class="i-edit" viewBox="0 0 22 18"><path d="M13.2 1 H4 A3 3 0 0 0 1 4 V14 A3 3 0 0 0 4 17 H14 A3 3 0 0 0 17 14 V11.6" fill="none" stroke="#55abe6" stroke-width="1.7" stroke-linecap="round"/><path d="M8.6 13.9 L9.2 10.6 L17.4 2.4 L20.1 5.1 L11.9 13.3 Z" fill="#3b9de2"/><path d="M18.1 1.7 L19 0.8 A0.9 0.9 0 0 1 20.3 0.8 L21.7 2.2 A0.9 0.9 0 0 1 21.7 3.5 L20.8 4.4 Z" fill="#3b9de2"/><path d="M8.6 13.9 L9 11.7 L10.8 13.5 Z" fill="#fff" opacity=".9"/></svg><svg class="i-trash" viewBox="0 0 17 19"><path d="M5.3 3.6 V2.2 A1.4 1.4 0 0 1 6.7 0.8 H10.3 A1.4 1.4 0 0 1 11.7 2.2 V3.6" fill="none" stroke="#df2020" stroke-width="1.5"/><rect x="0.2" y="3.6" width="16.6" height="1.7" rx=".5" fill="#df2020"/><path d="M1.7 5 H15.3 V17 A1.6 1.6 0 0 1 13.7 18.6 H3.3 A1.6 1.6 0 0 1 1.7 17 Z" fill="#df2020"/><rect x="4.6" y="7" width="1.25" height="9.2" fill="#fff" opacity=".92"/><rect x="7.9" y="7" width="1.25" height="9.2" fill="#fff" opacity=".92"/><rect x="11.2" y="7" width="1.25" height="9.2" fill="#fff" opacity=".92"/></svg></td></tr>
</tbody></table>
<div id="pgl"><a>首页</a> <a>上一页</a><b>[2]</b><a>下一页</a> <a>末页</a></div>
<div id="pgr">11 - 20共 30 条</div>
</div>
  </div>
  <div id="sbtrack"></div>
  <div id="sb"></div>
<div class="fb" style="top:197.4px;height:138.7px;padding-top:6.6px">学校<br>团组<br>织关<br>系梳<br>理及<br>录入<br>专区<svg style="display:block;margin:6.4px auto 0;width:17px;height:17px" viewBox="0 0 17 17"><circle cx="8.5" cy="8.5" r="7.4" fill="none" stroke="#fff" stroke-width="1.3"/><path d="M4.9 6.9 H12.1 L8.5 11 Z" fill="#fff"/></svg></div>
<div class="fb" style="top:341.1px;height:42.4px;padding-top:7px">全局<br>搜索</div>
<div class="fb" style="top:389px;height:41.5px;padding-top:6.6px">常见<br>问题</div>
<div class="fb" style="top:436px;height:42.1px;padding-top:7px">在线<br>培训</div>
<div class="fb s" style="top:488.1px;height:43px;padding-top:3.7px">小程序<br>扫一扫</div>

</div>
<div class="eb" style="left:1317.2px;top:46.6px;width:2px;height:4px;background:#555;border-radius:2px 0 0 2px"></div>
<div class="eb" style="left:1317px;top:86.6px;width:2px;height:2px;background:#5b8def"></div>
<div class="eb" style="left:1317px;top:120px;width:2px;height:5px;background:#f08a2a"></div>
<div class="eb" style="left:1317.4px;top:162.4px;width:2px;height:2px;background:#444"></div>
<div class="eb" style="left:1317px;top:191.6px;width:2px;height:4px;background:#5b9bea"></div>
<div class="eb" style="left:1317px;top:225.6px;width:2px;height:4px;background:#5b9bea"></div>
<div class="eb" style="left:1317px;top:256.4px;width:2px;height:2px;background:#5b9bea"></div>
<div class="eb" style="left:1312.4px;top:279.6px;width:7px;height:1px;background:#d4d4d4;border-radius:0"></div>
<div class="eb" style="left:1310.4px;top:611.6px;width:10px;height:30.6px;background:#fdfdfd;border-radius:5px 0 0 5px"></div>
<div class="eb" style="left:1313px;top:646.2px;width:6px;height:1px;background:#d4d4d4;border-radius:0"></div>
<div class="eb" style="left:1317.6px;top:663.6px;width:2px;height:4px;background:#555"></div>
<div id="gap"></div>
<div id="task">
<!-- weather -->
<svg class="abs" style="left:10px;top:10.9px;width:22px;height:20px" viewBox="0 0 22 20"><defs><linearGradient id="wg" x1="0" y1="0" x2="1" y2="1"><stop offset="0" stop-color="#b3b9be"/><stop offset="1" stop-color="#83898f"/></linearGradient></defs><circle cx="9.5" cy="9.7" r="9.2" fill="url(#wg)"/><path d="M11.2 15.4 A2.3 2.3 0 0 1 11.4 10.9 A3 3 0 0 1 17 10.6 A2.4 2.4 0 0 1 18.2 15.2 Z" fill="#eef0f2"/></svg>
<!-- windows -->
<svg class="abs" style="left:486.6px;top:10.6px;width:21px;height:21px" viewBox="0 0 21 21"><defs><linearGradient id="wl" x1="0" y1="0" x2="1" y2="1"><stop offset="0" stop-color="#56c8fb"/><stop offset="1" stop-color="#0b77d3"/></linearGradient></defs><path d="M0 0 H10 V10 H0 Z M11 0 H21 V10 H11 Z M0 11 H10 V21 H0 Z M11 11 H21 V21 H11 Z" fill="url(#wl)"/></svg>
<!-- search -->
<div class="abs" id="srch"><svg class="abs" style="left:9px;top:6.4px;width:15px;height:15px" viewBox="0 0 15 15"><circle cx="6.2" cy="6" r="4.7" fill="none" stroke="#1f1f1f" stroke-width="1.5"/><path d="M9.6 9.6 L13.3 13.4" stroke="#1f1f1f" stroke-width="1.7" stroke-linecap="round"/></svg><span>搜索</span>
<svg class="abs" style="left:143.5px;top:3px;width:44px;height:23px" viewBox="0 0 44 23"><ellipse cx="22" cy="20.5" rx="21" ry="2.3" fill="#cfe3dd"/><path d="M9 4.5 a2.2 2.2 0 0 1 4 -1 a1.7 1.7 0 0 1 2.4 1.6 H7.6 A1 1 0 0 1 9 4.5Z" fill="#f1b9c1"/><path d="M31.5 4 a2 2 0 0 1 3.6 -0.8 a1.6 1.6 0 0 1 2.3 1.5 H30.4 A0.9 0.9 0 0 1 31.5 4Z" fill="#f1b9c1"/><path d="M1.5 20 C1.5 15 4 12 7.5 12.5 C9 9.5 13 9.5 14.5 12.5 C17 12 18.5 14.5 18 17 L18 20 Z" fill="#5fae62"/><path d="M26 20 V15.5 C26 12.5 29 10.5 31.5 12 C33.5 9.5 37.5 10.5 38 13.5 C41 13.5 43 16.5 42.2 20 Z" fill="#6ab56a"/><path d="M4 20 C4 17 6 15.5 8 16.5 C9.5 14.5 12.5 15.5 12.5 18 L12.5 20Z M32 20 C32 17.5 34 16 36 17 C38 16 40 17.5 39.5 20Z" fill="#3f8f4c"/><path d="M21.3 1 L22.7 1 L23.4 9 H20.6 Z" fill="#d88f8a"/><rect x="20" y="9" width="4" height="7" fill="#b7c3d8"/><rect x="16.5" y="13.5" width="11" height="6.7" fill="#9db1cf"/><rect x="18" y="15" width="1.6" height="3" fill="#e8eef7"/><rect x="21.2" y="15" width="1.6" height="3" fill="#e8eef7"/><rect x="24.4" y="15" width="1.6" height="3" fill="#e8eef7"/><rect x="12.5" y="16.5" width="4.2" height="3.8" fill="#c7a9bd"/><rect x="27.3" y="16.5" width="4.2" height="3.8" fill="#c7a9bd"/></svg></div>
<!-- task view -->
<svg class="abs" style="left:721px;top:10px;width:22px;height:21px" viewBox="0 0 22 21"><rect x="1.1" y="5.9" width="15.7" height="14.1" rx="2.2" fill="#1f1f1f"/><rect x="6.7" y="0.9" width="14.9" height="12.7" rx="2.2" fill="rgba(255,255,255,.78)" stroke="rgba(205,218,218,.8)" stroke-width=".5"/></svg>
<!-- edge -->
<div class="abs" style="left:754.6px;top:4.0px;width:33.4px;height:33.6px;border-radius:4px;background:rgba(255,255,255,.48);box-shadow:0 0 0 .6px rgba(255,255,255,.55)"></div>
<svg class="abs" style="left:760.4px;top:9.8px;width:22px;height:22px" viewBox="0 0 22 22"><defs><linearGradient id="e2" x1="0" y1=".3" x2="1" y2=".1"><stop offset="0" stop-color="#2a8fe2"/><stop offset=".5" stop-color="#31bdb8"/><stop offset="1" stop-color="#83dc45"/></linearGradient><linearGradient id="e1" x1="0" y1="0" x2=".6" y2="1"><stop offset="0" stop-color="#2384d8"/><stop offset="1" stop-color="#12479a"/></linearGradient><linearGradient id="e3" x1="0" y1="0" x2="1" y2="1"><stop offset="0" stop-color="#1c6fc9"/><stop offset="1" stop-color="#0d3c86"/></linearGradient></defs><circle cx="11" cy="11" r="10.7" fill="url(#e2)"/><path d="M0.3 11.4 C1 7.6 4.6 5.4 8.4 5.6 C11.6 5.8 13.6 7.8 13.8 10 C12.6 8.8 10.6 8.6 9 9.6 C6.4 11.2 6.2 15 8 17.6 C9.6 20 12.4 21.4 15.2 21 C13.6 21.7 12 21.8 10.6 21.7 C4.8 21.5 0.1 16.9 0.3 11.4 Z" fill="url(#e1)"/><path d="M8.6 12.6 C8.6 16.6 12 19.4 15.6 19 C17.6 18.8 19.6 17.6 20.8 15.8 C19.4 19.4 15.6 21.9 11.6 21.7 C7.2 21.2 5.4 17.2 6.2 13.8 C6.6 12 7.8 10.4 9.4 9.4 C8.8 10.4 8.6 11.4 8.6 12.6 Z" fill="url(#e3)"/><path d="M8.9 12.1 C8.9 10.3 10.3 9 12 9 C13.8 9 15.2 10.3 15.2 11.9 C15.2 13 14.6 13.8 14 14.3 C16.6 15 19.4 14.6 21.4 13.2 C20.6 16.4 17.6 17.9 14.8 17.7 C11.6 17.5 8.9 15.2 8.9 12.1 Z" fill="#f3fafc"/></svg>
<div class="ind" style="left:764.9px;width:13px;background:#6c8794;height:2.5px;top:34.8px"></div>
<!-- netease -->
<svg class="abs" style="left:799.2px;top:9.8px;width:21px;height:21.6px" viewBox="0 0 21 21.6"><rect width="21" height="21.6" rx="4.2" fill="#dd001b"/><g fill="none" stroke="#fff" stroke-linecap="round"><path d="M13.9 4.4 C12.9 3.6 11.4 3.9 11.3 5.3 L12.1 12.3 A2.6 2.6 0 1 1 9.7 9.1 C12.3 8.7 14.7 10.5 14.7 13 A4.8 4.8 0 0 1 9.9 17.6 A5.7 5.7 0 0 1 8.1 6.4" stroke-width="1.7"/></g></svg>
<div class="ind" style="left:807.3px;width:5px"></div>
<!-- wechat -->
<svg class="abs" style="left:837.4px;top:11.4px;width:21.5px;height:17.5px" viewBox="0 0 21.5 17.5"><path d="M8.2 0.3 C12.6 0.3 16.1 3.2 16.1 6.8 C16.1 10.4 12.6 13.3 8.2 13.3 C7.2 13.3 6.3 13.2 5.5 12.9 L2.6 14.4 L3.2 11.9 C1.4 10.7 0.3 8.9 0.3 6.8 C0.3 3.2 3.8 0.3 8.2 0.3 Z" fill="#2dc55a"/><circle cx="5.6" cy="4.8" r="1" fill="#17602f"/><circle cx="10.7" cy="4.8" r="1" fill="#17602f"/><path d="M15.3 6.6 C18.6 6.6 21.2 8.8 21.2 11.5 C21.2 13 20.4 14.3 19.1 15.2 L19.5 17 L17.4 15.9 C16.7 16.1 16 16.2 15.3 16.2 C12 16.2 9.4 14.1 9.4 11.5 C9.4 8.8 12 6.6 15.3 6.6 Z" fill="#eceeee"/><circle cx="13.4" cy="10.3" r=".8" fill="#8b9392"/><circle cx="17.3" cy="10.3" r=".8" fill="#8b9392"/></svg>
<div class="ind" style="left:845.6px;width:5.4px"></div>
<!-- tray -->
<svg class="abs" style="left:1105.5px;top:16.9px;width:11px;height:7.5px" viewBox="0 0 11 7.5"><path d="M1 6.3 L5.5 1.5 L10 6.3" fill="none" stroke="#1d1d1d" stroke-width="1.35" stroke-linecap="round" stroke-linejoin="round"/></svg>
<svg class="abs" style="left:1131.4px;top:15.0px;width:15.4px;height:11px" viewBox="0 0 15.4 11"><path d="M4 10.3 A3.1 3.1 0 0 1 3.4 4.2 A4.2 4.2 0 0 1 11.3 3.5 A3.5 3.5 0 0 1 11.8 10.3 Z" fill="#9a9a9a" stroke="#2a2a2a" stroke-width="1.1" stroke-linejoin="round"/></svg>
<div class="abs" style="left:1159.6px;top:11.8px;font-size:13.6px;line-height:18px;color:#1a1a1a;font-weight:400">中</div>
<svg class="abs" style="left:1187.4px;top:14.4px;width:15px;height:12px" viewBox="0 0 15 12"><g fill="none" stroke="#1d1d1d" stroke-width="1.15" stroke-linecap="round"><path d="M0.8 4.6 A9.4 9.4 0 0 1 14.2 4.6"/><path d="M3 6.9 A6.3 6.3 0 0 1 12 6.9"/><path d="M5.2 9 A3.2 3.2 0 0 1 9.8 9"/></g><circle cx="7.5" cy="10.6" r="1" fill="#1d1d1d"/></svg>
<svg class="abs" style="left:1209px;top:14.8px;width:13.4px;height:12px" viewBox="0 0 13.4 12"><path d="M0.7 4.2 H2.8 L5.7 1.3 V10.7 L2.8 7.8 H0.7 Z" fill="none" stroke="#1d1d1d" stroke-width="1.05" stroke-linejoin="round"/><path d="M7.6 3.9 A3 3 0 0 1 7.6 8.1" fill="none" stroke="#1d1d1d" stroke-width="1.05" stroke-linecap="round"/><path d="M9.3 2.3 A5.2 5.2 0 0 1 9.3 9.7" fill="none" stroke="#6a6a6a" stroke-width="1" stroke-linecap="round"/><path d="M11 0.9 A7.4 7.4 0 0 1 11 11.1" fill="none" stroke="#a5a5a5" stroke-width=".9" stroke-linecap="round"/></svg>
<svg class="abs" style="left:1229.6px;top:16.4px;width:15px;height:9px" viewBox="0 0 15 9"><rect x=".6" y=".6" width="12" height="7.8" rx="1.9" fill="none" stroke="#1d1d1d" stroke-width="1.15"/><rect x="2.3" y="2.3" width="5.6" height="4.4" rx=".7" fill="#1d1d1d"/><path d="M13.4 3.1 Q14.7 4.5 13.4 5.9 Z" fill="#1d1d1d"/></svg>
<div class="abs clk" style="top:6.6px">11:24</div>
<div class="abs clk" style="top:20.1px">2024/1/15</div>
<svg class="abs" style="left:1313.4px;top:14.8px;width:6px;height:13px" viewBox="0 0 6 13"><path d="M6 0 C2.6 .3 1.3 2.6 1.3 5.2 V8.2 L0 10 V10.6 H6 Z" fill="#1d1d1d"/></svg>

</div>
</body>
</html>
